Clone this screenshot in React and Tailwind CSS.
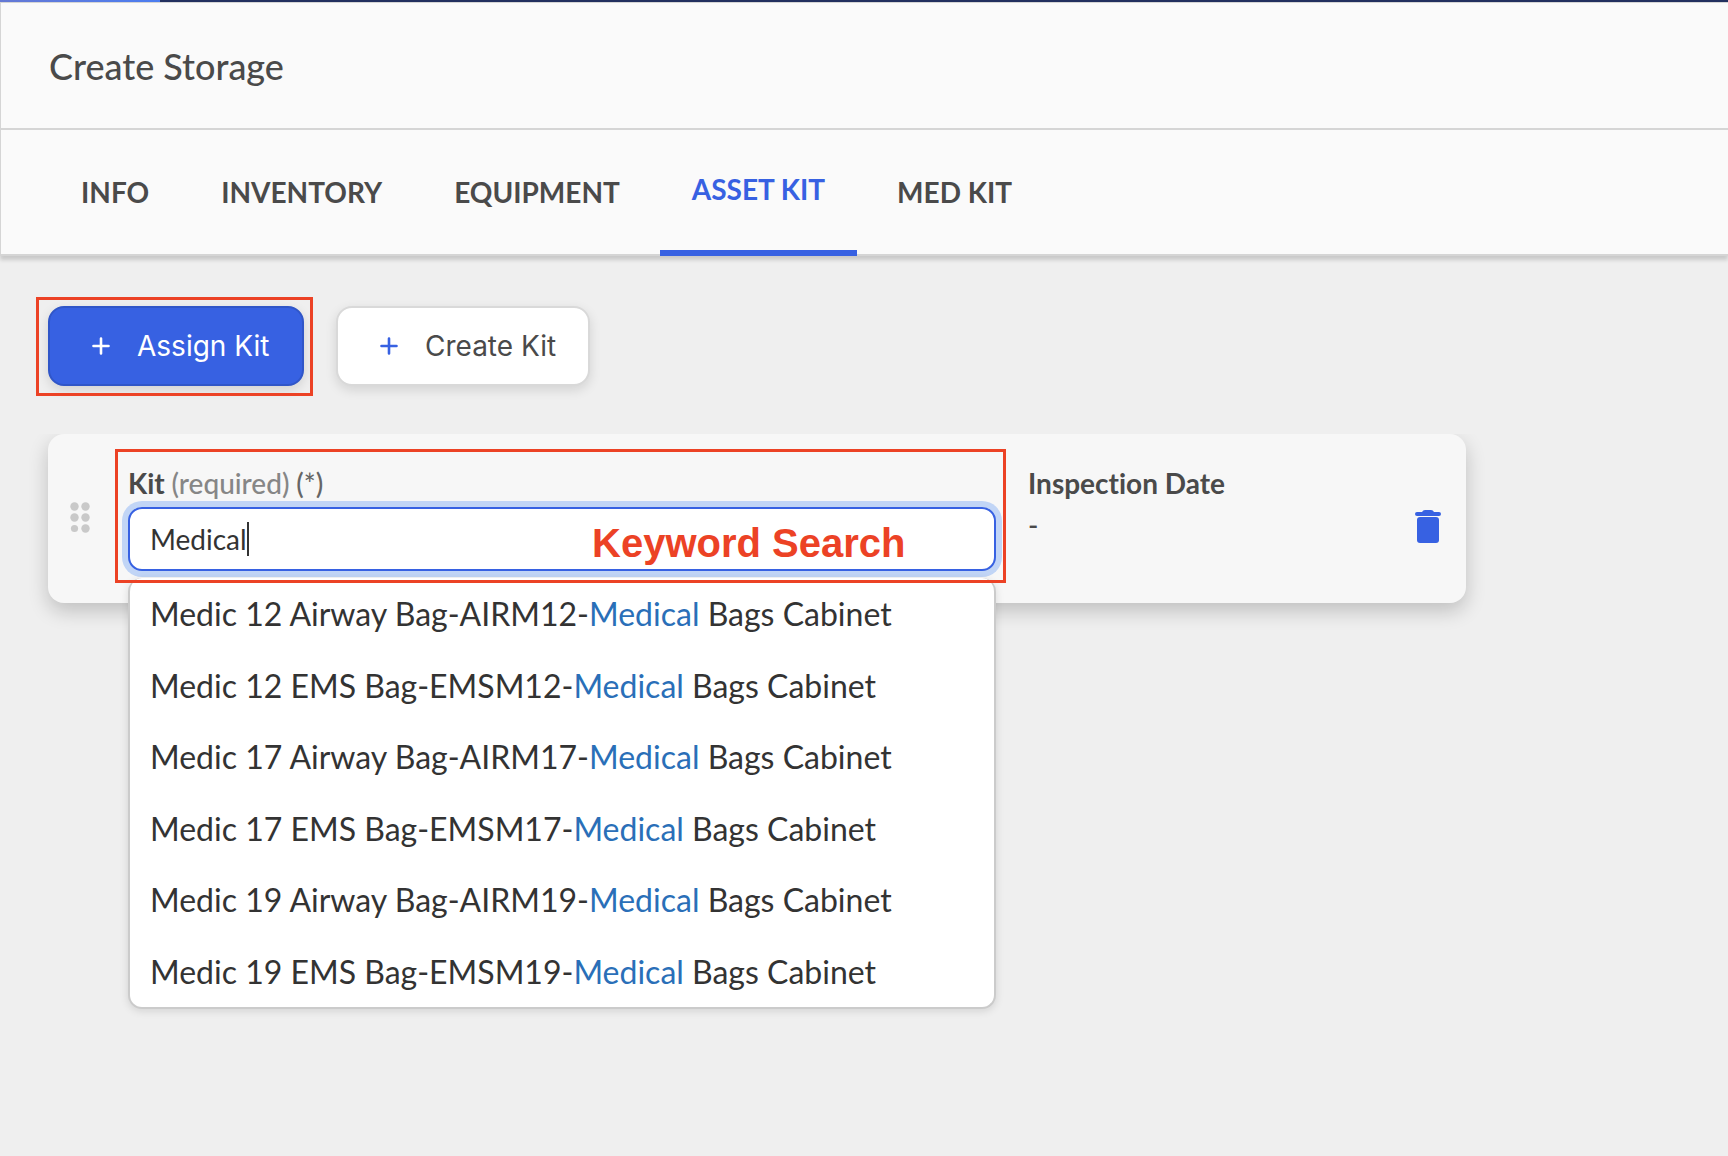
import { useState } from 'react';

const tabs = ['Info', 'Inventory', 'Equipment', 'Asset Kit', 'Med Kit'];

const kits = [
  'Medic 12 Airway Bag-AIRM12-Medical Bags Cabinet',
  'Medic 12 EMS Bag-EMSM12-Medical Bags Cabinet',
  'Medic 17 Airway Bag-AIRM17-Medical Bags Cabinet',
  'Medic 17 EMS Bag-EMSM17-Medical Bags Cabinet',
  'Medic 19 Airway Bag-AIRM19-Medical Bags Cabinet',
  'Medic 19 EMS Bag-EMSM19-Medical Bags Cabinet',
];

const PlusIcon = ({ className }) => (
  <svg viewBox="0 0 18 18" className={`size-[18px] ${className}`} aria-hidden="true">
    <path d="M9 1.5v15M1.500 9h15" stroke="currentColor" strokeWidth="2.6" strokeLinecap="round" />
  </svg>
);

const GripIcon = () => (
  <svg viewBox="0 0 20 31" className="w-5 h-[31px] text-[#c9c9c9]" fill="currentColor" aria-hidden="true">
    <circle cx="4.5" cy="4.5" r="4.2" />
    <circle cx="15.5" cy="4.5" r="4.2" />
    <circle cx="4.5" cy="15.5" r="4.2" />
    <circle cx="15.5" cy="15.5" r="4.2" />
    <circle cx="4.5" cy="26.5" r="3.6" />
    <circle cx="15.5" cy="26.5" r="4.2" />
  </svg>
);

const TrashIcon = () => (
  <svg viewBox="0 0 26 33" className="w-[26px] h-[33px]" fill="currentColor" aria-hidden="true">
    <path d="M2 2h5Q8 0 10 0h6q2 0 3 2h5a2 2 0 0 1 0 4H2a2 2 0 0 1 0-4Z" />
    <path d="M5 7h16a3 3 0 0 1 3 3v20a3 3 0 0 1-3 3H5a3 3 0 0 1-3-3V10a3 3 0 0 1 3-3Z" />
  </svg>
);

// Wraps the part of the option that matches the typed keyword
const Highlight = ({ text, keyword }) => {
  const start = keyword ? text.indexOf(keyword) : -1;
  if (start < 0) return text;
  return (
    <>
      {text.slice(0, start)}
      <span className="text-[#2a6fb8]">{keyword}</span>
      {text.slice(start + keyword.length)}
    </>
  );
};

const TabBar = ({ active, onChange }) => (
  <nav className="relative z-10 flex h-[126px] gap-2 border-b-2 border-l border-[#d5d5d5] bg-[#fafafa] pl-12 shadow-[0_4px_4px_rgba(0,0,0,0.16)]">
    {tabs.map((tab) => (
      <button
        key={tab}
        type="button"
        onClick={() => onChange(tab)}
        className={
          tab === active
            ? '-mb-0.5 border-b-6 border-[#3761e2] px-8 pb-0.5 text-[28px] leading-9 font-bold text-[#3761e2] uppercase'
            : '-mb-0.5 px-8 pb-0.5 text-[28px] leading-9 font-bold text-[#4a4a4a] uppercase'
        }
      >
        {tab}
      </button>
    ))}
  </nav>
);

const KitSearch = () => {
  const [keyword, setKeyword] = useState('Medical');

  return (
    <div className="relative w-[868px]">
      <label htmlFor="kit" className="block text-[28px] leading-10 font-bold text-[#4a4a4a]">
        Kit <span className="font-medium text-[#868686]">(required)</span>{' '}
        <span className="font-medium text-[#666]">(*)</span>
      </label>
      <div className="relative mt-1">
        <input
          id="kit"
          type="text"
          value={keyword}
          onChange={(e) => setKeyword(e.target.value)}
          autoComplete="off"
          className="block h-16 w-full rounded-[14px] border-2 border-[#3761e2] bg-white px-5 text-[28px] text-[#333] caret-transparent ring-6 ring-[#c1d5f6] outline-none"
        />
        <span className="pointer-events-none absolute top-[15px] left-[119px] h-[34px] w-0.5 bg-[#333]" />
        <span className="pointer-events-none absolute top-3 left-[464px] font-['Liberation_Sans',sans-serif] text-[40px] leading-12 font-bold whitespace-nowrap text-[#ec4225]">
          Keyword Search
        </span>
      </div>
      <ul className="absolute top-[115px] left-0 w-full rounded-[14px] border-2 border-t-0 border-[#cbcbcb] bg-white text-[32px] text-[#333] shadow-[0_2px_8px_rgba(0,0,0,0.12)]">
        {kits.map((kit) => (
          <li key={kit} className="px-5 py-3 leading-12 whitespace-nowrap even:pb-[11px] last:pb-3">
            <Highlight text={kit} keyword={keyword} />
          </li>
        ))}
      </ul>
      <div className="pointer-events-none absolute -top-[14px] -left-[13px] h-[134px] w-[891px] border-3 border-[#ec4225]" />
    </div>
  );
};

const App = () => {
  const [activeTab, setActiveTab] = useState('Asset Kit');

  return (
    <div className="min-h-screen bg-[#efefef] font-[Lato,sans-serif] [font-variant-ligatures:none]">
      <div className="h-0.5 bg-[#22305f]">
        <div className="h-full w-40 bg-linear-to-r from-[#6478d4] to-[#4b7df0]" />
      </div>
      <header className="flex h-32 items-center border-t border-b-2 border-l border-[#d5d5d5] bg-[#fafafa] pl-12">
        <h1 className="text-4xl font-medium text-[#4a4a4a]">Create Storage</h1>
      </header>
      <TabBar active={activeTab} onChange={setActiveTab} />

      <main className="px-12 pt-[50px]">
        <div className="flex gap-8 font-[Inter,sans-serif] text-[28px]">
          <div className="relative">
            <button
              type="button"
              className="flex h-20 w-64 items-center rounded-2xl border-2 border-[#3056c8] bg-[#3761e2] pl-[42px] text-white shadow-[0_4px_12px_rgba(0,0,0,0.12)]"
            >
              <PlusIcon className="mr-[27px]" />
              Assign Kit
            </button>
            <div className="pointer-events-none absolute -top-[9px] -right-[9px] -bottom-[10px] -left-3 border-3 border-[#ec4225]" />
          </div>
          <button
            type="button"
            className="flex h-20 w-[254px] items-center rounded-2xl border-2 border-[#d9d9d9] bg-white pl-[42px] text-[#4a4a4a] shadow-[0_4px_12px_rgba(0,0,0,0.12)]"
          >
            <PlusIcon className="mr-[27px] text-[#3761e2]" />
            Create Kit
          </button>
        </div>

        {/* the clip keeps the shadow off the top edge and leaves room for the open list */}
        <section className="mt-12 flex h-[169px] max-w-[1418px] rounded-2xl bg-[#f7f7f7] pr-[25px] pl-[22px] shadow-[0_8px_20px_rgba(0,0,0,0.2)] [clip-path:inset(0_-40px_-500px)]">
          <button type="button" aria-label="Reorder kit" className="mr-[38px] self-center pb-0.5">
            <GripIcon />
          </button>
          <div className="pt-[29px]">
            <KitSearch />
          </div>
          <dl className="ml-8 pt-[29px] text-[28px] leading-10 text-[#4a4a4a]">
            <dt className="font-bold">Inspection Date</dt>
            <dd className="mt-0.5 font-medium">-</dd>
          </dl>
          <button type="button" aria-label="Delete kit" className="ml-auto self-center pt-4 text-[#3761e2]">
            <TrashIcon />
          </button>
        </section>
      </main>
    </div>
  );
};

export default App;
